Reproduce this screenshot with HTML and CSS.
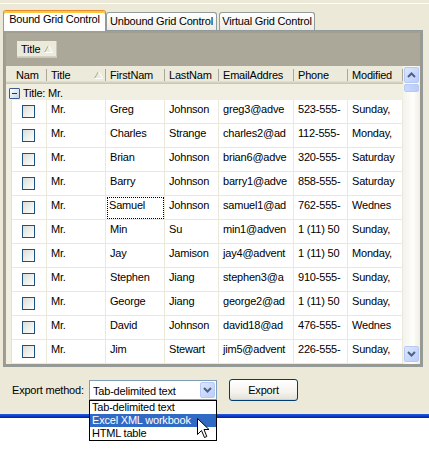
FILE: index.html
```html
<!DOCTYPE html>
<html lang="en">
<head>
    <meta charset="UTF-8">
    <title>Grid Export</title>
    <link rel="stylesheet" href="styles.css">
</head>
<body>
    <div class="topline"></div>

    <div class="tabs">
        <div class="tab tab-active">Bound Grid Control</div>
        <div class="tab tab-unbound">Unbound Grid Control</div>
        <div class="tab tab-virtual">Virtual Grid Control</div>
    </div>

    <div class="panel">
        <div class="grid">
            <div class="groupby">
                <div class="group-btn">
                    <span>Title</span>
                    <svg class="sort" width="9" height="8" viewBox="0 0 9 8"><path d="M0.5 7.5 L4.5 0.5" stroke="#ACA899" fill="none"/><path d="M4.5 0.5 L8.5 7.5 H0.5" stroke="#fff" fill="none"/></svg>
                </div>
            </div>
            <div class="grid-body">
                <div class="table">
                    <div class="cols header">
                        <div></div>
                        <div class="hcell">Nam</div>
                        <div class="hcell hcell-sort">
                            <span>Title</span>
                            <svg class="sort" width="9" height="8" viewBox="0 0 9 8"><path d="M0.5 7.5 L4.5 0.5" stroke="#ACA899" fill="none"/><path d="M4.5 0.5 L8.5 7.5 H0.5" stroke="#fff" fill="none"/></svg>
                        </div>
                        <div class="hcell">FirstNam</div>
                        <div class="hcell">LastNam</div>
                        <div class="hcell">EmailAddres</div>
                        <div class="hcell">Phone</div>
                        <div class="hcell">Modified</div>
                    </div>
                    <div class="group-row">
                        <span class="expander"></span>
                        <span>Title: Mr.</span>
                    </div>
                    <div id="rows"></div>
                </div>
                <div class="vscroll">
                    <div class="sbtn">
                        <svg width="9" height="6" viewBox="0 0 9 6"><path d="M1 5 L4.5 1.5 L8 5" stroke="#4D6185" stroke-width="2" fill="none"/></svg>
                    </div>
                    <div class="thumb"></div>
                    <div class="track"></div>
                    <div class="sbtn">
                        <svg width="9" height="6" viewBox="0 0 9 6"><path d="M1 1 L4.5 4.5 L8 1" stroke="#4D6185" stroke-width="2" fill="none"/></svg>
                    </div>
                </div>
            </div>
        </div>
    </div>

    <div class="export-row">
        <label class="export-label">Export method:</label>
        <div class="combo">
            <span class="combo-text">Tab-delimited text</span>
            <span class="combo-btn">
                <svg width="9" height="6" viewBox="0 0 9 6"><path d="M1 1 L4.5 4.5 L8 1" stroke="#4D6185" stroke-width="2" fill="none"/></svg>
            </span>
        </div>
        <button type="button" class="export-btn">Export</button>
    </div>

    <div class="taskbar"></div>
    <div class="desk"></div>

    <!-- open combo list, drawn over the page -->
    <div class="combo-list">
        <div class="combo-item">Tab-delimited text</div>
        <div class="combo-item selected">Excel XML workbook</div>
        <div class="combo-item">HTML table</div>
    </div>
    <svg class="cursor" width="13" height="21" viewBox="0 0 13 21"><path d="M0.5 0.5 V16.5 L4.5 12.5 L7.5 19.5 L9.8 18.5 L7 11.5 H12 Z" fill="#fff" stroke="#000" stroke-linejoin="miter"/></svg>

    <script>
        const people = [
            ['Greg', 'Johnson', 'greg3@adve', '523-555-', 'Sunday,'],
            ['Charles', 'Strange', 'charles2@ad', '112-555-', 'Monday,'],
            ['Brian', 'Johnson', 'brian6@adve', '320-555-', 'Saturday'],
            ['Barry', 'Johnson', 'barry1@adve', '858-555-', 'Saturday'],
            ['Samuel', 'Johnson', 'samuel1@ad', '762-555-', 'Wednes'],
            ['Min', 'Su', 'min1@adven', '1 (11) 50', 'Sunday,'],
            ['Jay', 'Jamison', 'jay4@advent', '1 (11) 50', 'Monday,'],
            ['Stephen', 'Jiang', 'stephen3@a', '910-555-', 'Sunday,'],
            ['George', 'Jiang', 'george2@ad', '1 (11) 50', 'Sunday,'],
            ['David', 'Johnson', 'david18@ad', '476-555-', 'Wednes'],
            ['Jim', 'Stewart', 'jim5@advent', '226-555-', 'Sunday,']
        ];

        const rows = document.getElementById('rows');
        people.forEach((p, i) => {
            const row = document.createElement('div');
            row.className = 'cols row';
            let html = '<div class="indent"></div>';
            html += '<div class="cell cell-check"><span class="check"></span></div>';
            html += '<div class="cell">Mr.</div>';
            p.forEach((value, j) => {
                const focus = (i === 4 && j === 0) ? ' focused' : '';
                html += `<div class="cell${focus}">${value}</div>`;
            });
            row.innerHTML = html;
            rows.appendChild(row);
        });
    </script>
</body>
</html>
```

FILE: styles.css
```css
body {
    margin: 0;
    width: 429px;
    height: 449px;
    overflow: hidden;
    position: relative;
    background-color: #ECE9D8;
    font-family: "Liberation Sans", Arial, sans-serif;
    font-size: 11px;
    letter-spacing: -0.2px;
    color: #000;
}

.topline {
    height: 3px;
    border-bottom: 1px solid #fff;
    margin-bottom: 6px;
}

/* tabs */
.tabs {
    display: flex;
    align-items: flex-end;
    height: 21px;
    margin-left: 3px;
    margin-bottom: -1px;
    position: relative;
    z-index: 1;
}
.tab {
    box-sizing: border-box;
    height: 18px;
    margin-bottom: 1px;
    border: 1px solid #919B9C;
    border-bottom: none;
    border-radius: 3px 3px 0 0;
    background: linear-gradient(#fff, #F3F2EC 70%, #ECEBE6);
    text-align: center;
    line-height: 17px;
    white-space: nowrap;
}
.tab-active {
    width: 103px;
    height: 21px;
    margin-bottom: 0;
    border-top: 1px solid #E68B2C;
    box-shadow: inset 0 2px #FFC83C;
    background: #fff;
    padding-top: 3px;
    line-height: 11px;
}
.tab-unbound {
    width: 111px;
}
.tab-virtual {
    width: 96px;
    margin-left: 2px;
}

.panel {
    box-sizing: border-box;
    width: 420px;
    height: 337px;
    margin-left: 3px;
    border: 1px solid #919B9C;
    background: #fff;
}

/* grid */
.grid {
    border: 2px solid #A29F92;
    border-right-color: #9C998C;
    border-bottom-color: #9C998C;
    background: #fff;
}
.groupby {
    height: 33px;
    background: #ACA899;
    padding: 8px 0 0 11px;
    box-sizing: border-box;
}
.group-btn {
    display: flex;
    align-items: center;
    justify-content: space-between;
    box-sizing: border-box;
    width: 40px;
    height: 17px;
    padding: 0 4px 1px 4px;
    background: #EBEADB;
    box-shadow: inset 0 -1px #CBC7B8, inset 0 -2px #D6D2C2, inset -1px 0 #CBC7B8;
}

.grid-body {
    display: flex;
    height: 298px;
}
.table {
    width: 397px;
}
.cols {
    display: grid;
    grid-template-columns: 6px 35px 59px 59px 54px 75px 54px 55px;
}

.header {
    height: 18px;
    background: #EBEADB;
    box-shadow: inset 0 -1px #CBC7B8, inset 0 -2px #D6D2C2, inset 0 -3px #E2DECD;
}
.hcell {
    padding: 1px 0 0 4px;
    line-height: 17px;
    white-space: nowrap;
    overflow: hidden;
    background:
        linear-gradient(#ACA899, #ACA899) right 0 top 3px / 1px 12px no-repeat;
}
.hcell-sort {
    display: flex;
    align-items: center;
    justify-content: space-between;
    padding-right: 3px;
    padding-top: 0;
}
.sort {
    display: block;
    flex: none;
}

.group-row {
    display: flex;
    align-items: center;
    height: 16px;
    padding-left: 3px;
    background: #F1EFE2;
    line-height: 13px;
}
.group-row span:last-child {
    padding-top: 3px;
    margin-left: 3px;
}
.expander {
    box-sizing: border-box;
    width: 11px;
    height: 11px;
    margin-top: 3px;
    border: 1px solid #3A5D8C;
    border-radius: 1px;
    background:
        linear-gradient(#1E2F55, #1E2F55) center / 5px 1px no-repeat,
        linear-gradient(135deg, #fff, #C5D3E8);
}

.row {
    height: 24px;
}
.indent {
    background: #F1EFE2;
    border-right: 1px solid #E4E1D2;
}
.cell {
    box-sizing: border-box;
    padding: 2px 0 0 4px;
    line-height: 14px;
    white-space: nowrap;
    overflow: hidden;
    border-right: 1px solid #EBE9DA;
    border-bottom: 1px solid #EBE9DA;
}
.cell-check {
    display: flex;
    align-items: center;
    justify-content: center;
    padding: 0 1px 0 0;
}
.check {
    box-sizing: border-box;
    width: 13px;
    height: 13px;
    border: 1px solid #1C5180;
    background: linear-gradient(135deg, #DCDCD7, #fff);
}
.focused {
    outline: 1px dotted #000;
    outline-offset: -2px;
    padding-left: 3px;
}

/* scrollbar */
.vscroll {
    display: flex;
    flex-direction: column;
    width: 17px;
    background: linear-gradient(to right, #F3F2ED, #FEFEFB 60%, #EEEDE5);
}
.sbtn {
    display: flex;
    align-items: center;
    justify-content: center;
    box-sizing: border-box;
    width: 15px;
    height: 16px;
    margin: 1px 0 0 1px;
    border: 1px solid #B7CAF5;
    border-radius: 2px;
    background: linear-gradient(135deg, #DDE7FE, #B9CDFA);
}
.sbtn:last-child {
    margin-bottom: 2px;
}
.thumb {
    box-sizing: border-box;
    width: 15px;
    height: 8px;
    margin: 1px 0 0 1px;
    border: 1px solid #B7CAF5;
    border-radius: 2px;
    background: linear-gradient(to right, #C9D8FC, #B9CCF8);
}
.track {
    flex: 1;
}

/* export controls */
.export-row {
    display: flex;
    align-items: center;
    height: 22px;
    margin-top: 12px;
    padding-left: 12px;
}
.export-label {
    width: 77px;
}
.combo {
    display: flex;
    align-items: flex-start;
    justify-content: space-between;
    box-sizing: border-box;
    width: 128px;
    height: 20px;
    border: 1px solid #7F9DB9;
    background: #fff;
}
.combo-text {
    padding: 3px 0 0 3px;
    line-height: 14px;
}
.combo-btn {
    display: flex;
    align-items: center;
    justify-content: center;
    box-sizing: border-box;
    width: 15px;
    height: 16px;
    margin: 1px 1px 0 0;
    border: 1px solid #B7CAF5;
    border-radius: 2px;
    background: linear-gradient(135deg, #DDE7FE, #B9CDFA);
}
.export-btn {
    width: 69px;
    height: 22px;
    margin-left: 12px;
    padding: 0;
    border: 1px solid #003C74;
    border-radius: 3px;
    background: linear-gradient(#fff, #F4F3EE 60%, #E3E0D6);
    box-shadow: inset 0 -1px #D6D0C5;
    font-family: "Liberation Sans", Arial, sans-serif;
    font-size: 11px;
    letter-spacing: -0.2px;
    color: #000;
}

.taskbar {
    height: 4px;
    margin-top: 13px;
    background: linear-gradient(#2B5FE0, #0D3ACD 50%, #00249C);
}
.desk {
    height: 31px;
    background: #fff;
}

/* dropdown popup and mouse pointer lie over the page */
.combo-list {
    position: absolute;
    left: 89px;
    top: 400px;
    width: 128px;
    box-sizing: border-box;
    border: 1px solid #000;
    background: #fff;
}
.combo-item {
    height: 13px;
    line-height: 13px;
    padding-left: 2px;
    white-space: nowrap;
}
.combo-item.selected {
    background: #316AC5;
    color: #fff;
}
.cursor {
    position: absolute;
    left: 197px;
    top: 418px;
}
```
